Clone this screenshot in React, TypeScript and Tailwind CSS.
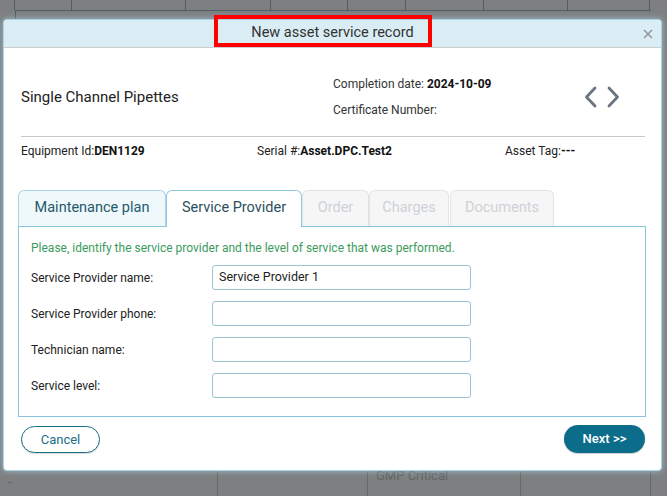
import React from "react";

function Chevron({ dir }: { dir: "left" | "right" }) {
  return (
    <svg width="13" height="22" viewBox="0 0 13 22" fill="none">
      <polyline
        points={dir === "left" ? "11,2 2.5,11 11,20" : "2,2 10.5,11 2,20"}
        stroke="#6b7481"
        strokeWidth="2.8"
        strokeLinecap="round"
        strokeLinejoin="round"
      />
    </svg>
  );
}

function Field({ label, value }: { label: string; value?: string }) {
  return (
    <div className="flex items-center h-[25px]">
      <div className="w-[181px] text-[12px] text-[#222]">{label}</div>
      <div className="w-[259px] h-[25px] rounded-[3px] border border-[#9cc4d4] bg-white flex items-center px-[6px] text-[12.5px] text-[#222]">
        {value}
      </div>
    </div>
  );
}

export default function App() {
  return (
    <div className="relative w-[667px] h-[496px] overflow-hidden bg-[#7e7f80] [font-family:Roboto,'Liberation_Sans',sans-serif]">
      {/* background table (dimmed page behind modal) */}
      <div className="flex flex-col h-full justify-between">
        <div>
          <div className="flex h-[10px]">
            <div className="w-[15px] border-r border-[#4d6068]" />
            <div className="w-[57px] border-r border-[#4d6068]" />
            <div className="w-[114px] border-r border-[#4d6068]" />
            <div className="w-[85px] border-r border-[#4d6068]" />
            <div className="w-[77px] border-r border-[#4d6068]" />
            <div className="w-[58px] border-r border-[#4d6068]" />
            <div className="w-[78px] border-r border-[#4d6068]" />
            <div className="w-[84px] border-r border-[#4d6068]" />
            <div className="w-[82px] border-r border-[#4d6068]" />
          </div>
          <div className="ml-[15px] w-[636px] h-[10px] border-t border-l border-[#4d6068]" />
        </div>
        <div className="flex h-[34px] text-[#626364] text-[13px]">
          <div className="w-[218px] border-r border-[#686868] pl-[8px] pt-[10px]">-</div>
          <div className="w-[150px] border-r border-[#686868]" />
          <div className="w-[153px] border-r border-[#686868] pl-[8px] pt-[4px]">GMP Critical</div>
          <div className="w-[130px] border-r border-[#686868]" />
        </div>
      </div>

      {/* modal */}
      <div className="absolute left-[3px] top-[19px] w-[659px] h-[452px] bg-white rounded-[4px] border border-[#a9d4e4] shadow-[0_0_6px_rgba(170,220,240,0.7)] flex flex-col">
        <div className="relative h-[28px] bg-[#daedf4] border-b border-[#cdcdcd] rounded-t-[3px] flex items-center justify-center">
          <span className="text-[14.5px] text-[#333] mb-[1px]">New asset service record</span>
          <svg className="absolute right-[8px] top-[9px]" width="10" height="10" viewBox="0 0 10 10">
            <line x1="1" y1="1" x2="9" y2="9" stroke="#8a8f93" strokeWidth="1.3" />
            <line x1="9" y1="1" x2="1" y2="9" stroke="#8a8f93" strokeWidth="1.3" />
          </svg>
        </div>

        <div className="pl-[17px] pr-[16px] flex flex-col">
          <div className="mt-[29px] h-[40px] flex items-center">
            <div className="w-[312px] text-[15px] text-[#222]">Single Channel Pipettes</div>
            <div className="w-[251px] flex flex-col gap-[12px] text-[12px] text-[#333] leading-[14px]">
              <div>
                Completion date: <span className="font-bold text-[#111]">2024-10-09</span>
              </div>
              <div>Certificate Number:</div>
            </div>
            <div className="flex items-center gap-[10px]">
              <Chevron dir="left" />
              <Chevron dir="right" />
            </div>
          </div>

          <div className="mt-[19px] border-t border-[#c9c9c9]" />

          <div className="mt-[7px] h-[14px] leading-[14px] flex text-[12px] text-[#222]">
            <div className="w-[236px]">
              Equipment Id:<span className="font-bold text-[#111]">DEN1129</span>
            </div>
            <div className="w-[248px]">
              Serial #:<span className="font-bold text-[#111]">Asset.DPC.Test2</span>
            </div>
            <div>
              Asset Tag:<span className="font-bold text-[#111]">---</span>
            </div>
          </div>

          <div className="mt-[32px] ml-[-3px] mr-[-1px] flex flex-col">
            <div className="flex items-end h-[36px] text-[14.5px]">
              <div className="w-[148px] h-[36px] pb-[2px] rounded-t-[6px] border border-b-0 border-[#a8d4e4] bg-[#eff8fb] text-[#245a6c] flex items-center justify-center">
                Maintenance plan
              </div>
              <div className="relative z-10 w-[136px] h-[37px] mb-[-1px] pb-[3px] rounded-t-[6px] border border-b-0 border-[#8ecae0] bg-white text-[#2c4f5d] flex items-center justify-center">
                Service Provider
              </div>
              <div className="w-[67px] h-[36px] pb-[2px] rounded-t-[6px] border border-b-0 border-[#e3e3e3] bg-[#f6f6f6] text-[#cdd2d6] flex items-center justify-center">
                Order
              </div>
              <div className="w-[80px] h-[36px] pb-[2px] rounded-t-[6px] border border-b-0 border-[#e3e3e3] bg-[#f6f6f6] text-[#cdd2d6] flex items-center justify-center">
                Charges
              </div>
              <div className="ml-[1px] w-[104px] h-[36px] pb-[2px] rounded-t-[6px] border border-b-0 border-[#e3e3e3] bg-[#f6f6f6] text-[#cdd2d6] flex items-center justify-center">
                Documents
              </div>
            </div>
            <div className="h-[191px] border border-[#88c6df] px-[12px] pt-[14px] flex flex-col">
              <div className="text-[12px] leading-[14px] text-[#3b9b5d]">
                Please, identify the service provider and the level of service that was performed.
              </div>
              <div className="mt-[10px] flex flex-col gap-[11px]">
                <Field label="Service Provider name:" value="Service Provider 1" />
                <Field label="Service Provider phone:" />
                <Field label="Technician name:" />
                <Field label="Service level:" />
              </div>
            </div>
          </div>

          <div className="mt-[9px] flex items-center justify-between">
            <button className="w-[79px] h-[27px] rounded-full border-[1.5px] border-[#1b6f89] bg-white text-[#1b6f89] text-[13px] flex items-center justify-center shadow-[0_1px_1px_rgba(0,0,0,0.15)]">
              Cancel
            </button>
            <button className="w-[81px] h-[28px] mt-[-1px] rounded-full bg-[#0c6d8b] text-white text-[13px] font-medium flex items-center justify-center shadow-[0_1px_1px_rgba(0,0,0,0.2)]">
              Next &gt;&gt;
            </button>
          </div>
        </div>
      </div>

      {/* red annotation box */}
      <div className="absolute left-[214px] top-[15px] w-[218px] h-[32px] border-[4px] border-[#ff0000]" />
    </div>
  );
}
